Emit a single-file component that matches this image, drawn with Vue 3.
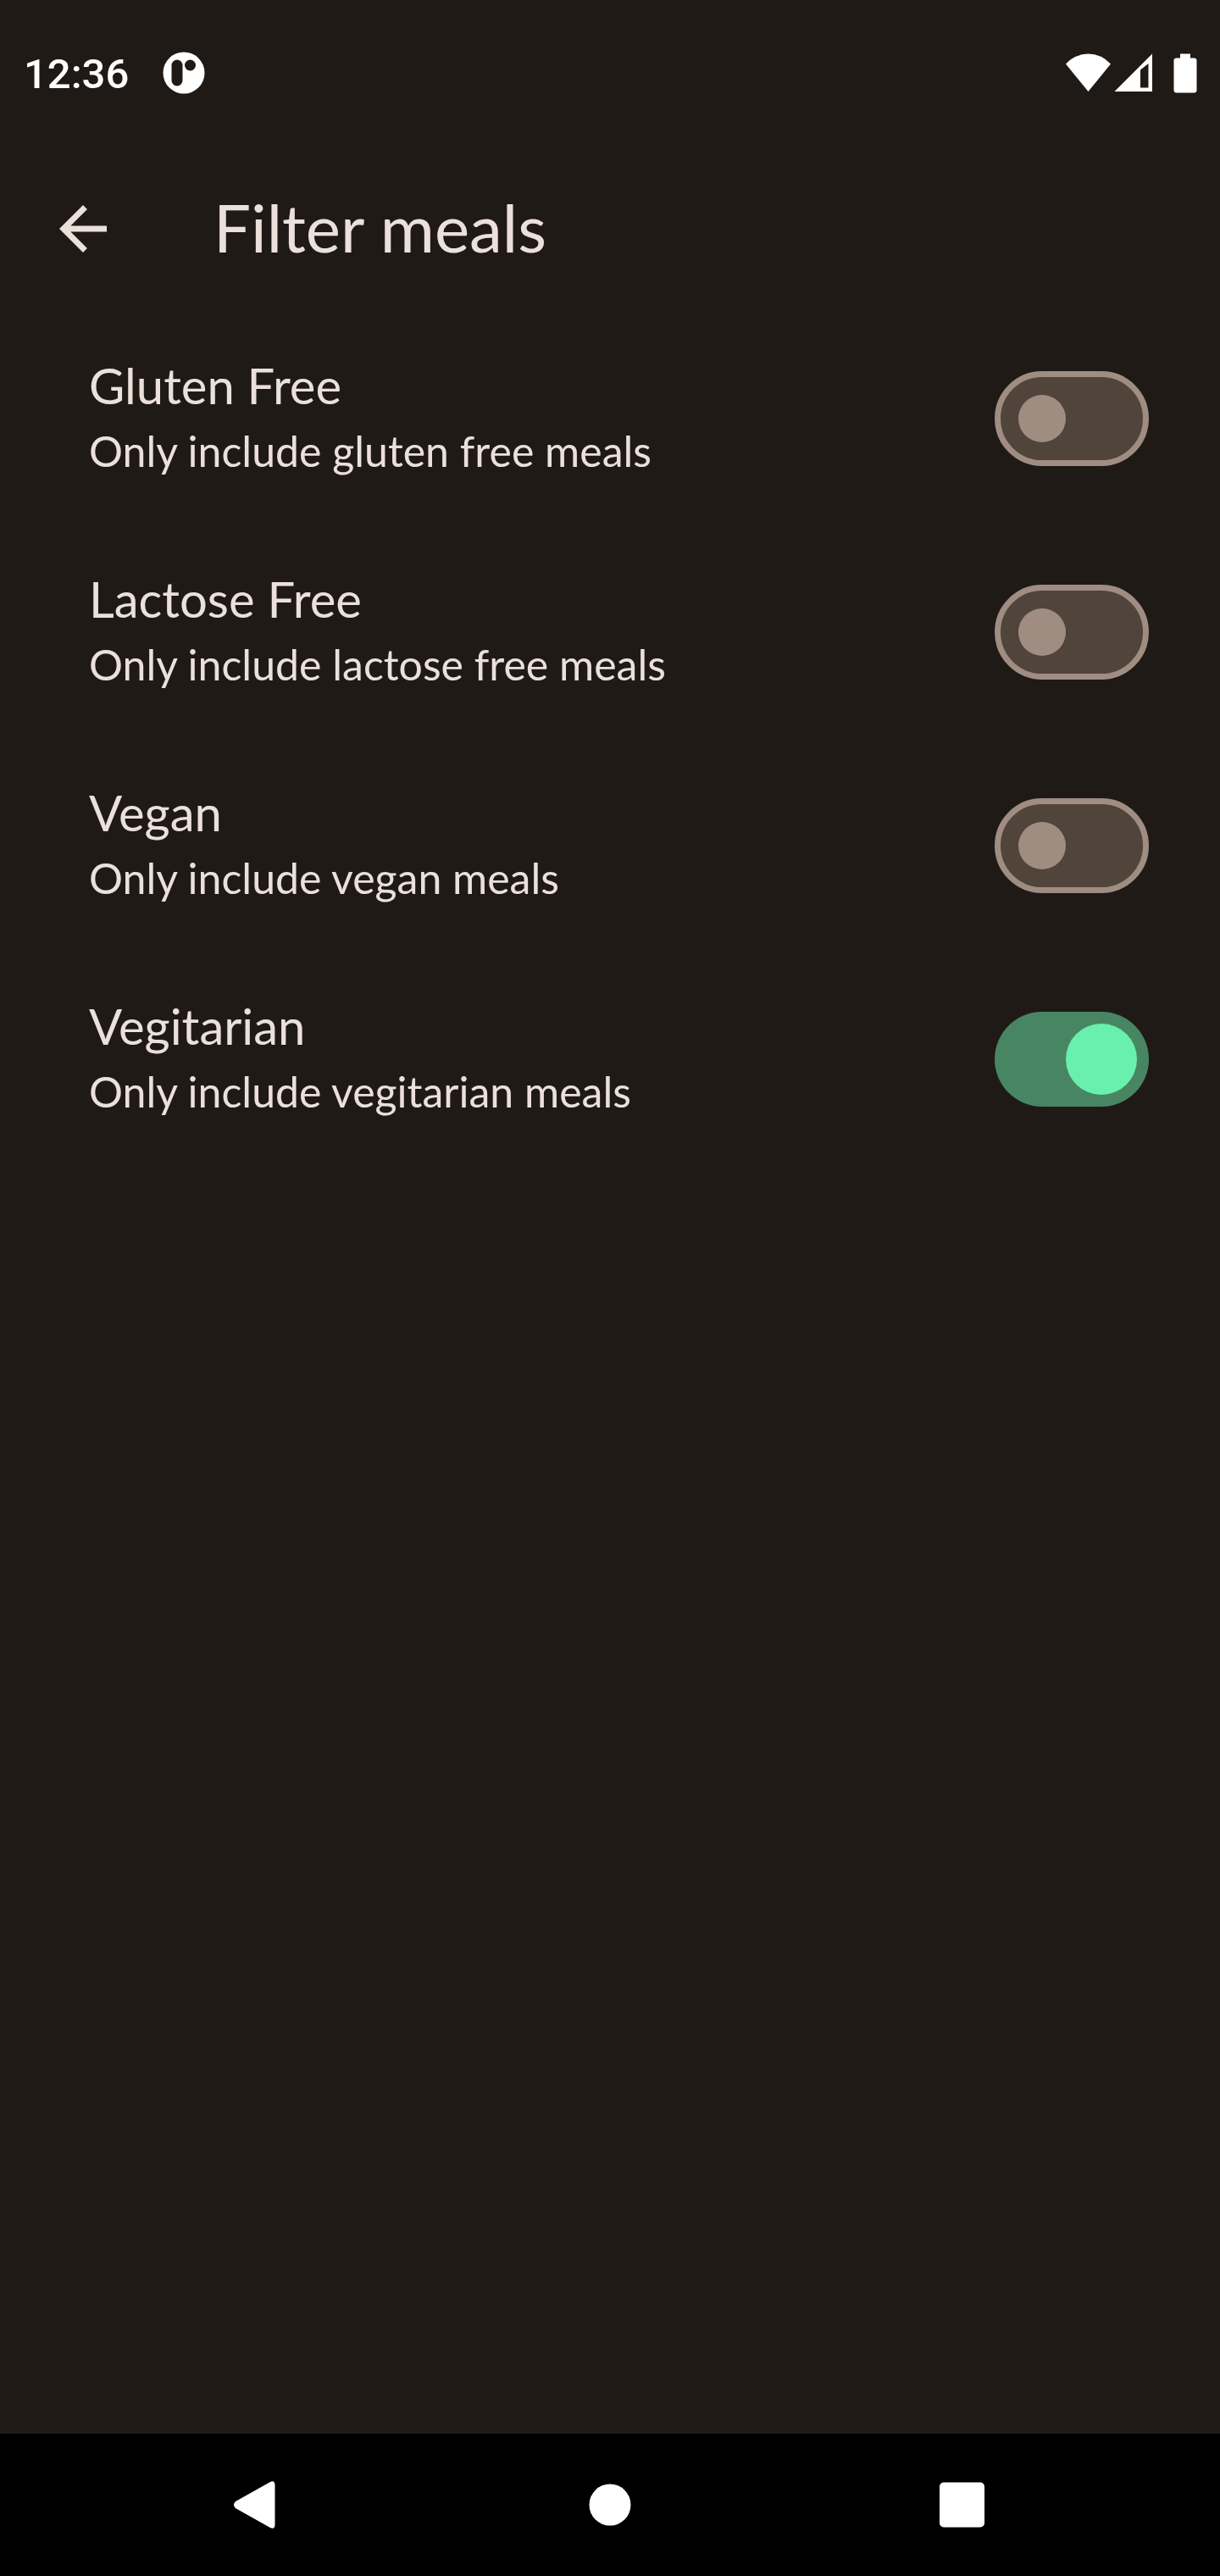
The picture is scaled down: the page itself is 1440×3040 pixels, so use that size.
<script setup>
import { ref } from 'vue'

const filters = ref([
  { id: 'gluten', title: 'Gluten Free', hint: 'Only include gluten free meals', on: false },
  { id: 'lactose', title: 'Lactose Free', hint: 'Only include lactose free meals', on: false },
  { id: 'vegan', title: 'Vegan', hint: 'Only include vegan meals', on: false },
  { id: 'vegitarian', title: 'Vegitarian', hint: 'Only include vegitarian meals', on: true },
])
</script>

<template>
  <div class="screen">
    <div class="status">
      <time class="clock">12:36</time>
      <svg class="notice" viewBox="0 0 50 50" aria-hidden="true">
        <circle cx="25" cy="25" r="24.5" fill="#fff" />
        <rect x="10.5" y="9.5" width="13" height="31" rx="6.5" />
        <circle cx="32.5" cy="16" r="6.5" />
      </svg>
      <svg class="signals" viewBox="0 0 156 48" aria-hidden="true">
        <path d="M0 13.500Q11.500 1.500 26.500 1.500T53 13.500L26.500 46Z" />
        <path fill-rule="evenodd" d="M57.500 46L102 1.500V46ZM88 20.500V41.500H97.500V13Z" />
        <path d="M135 1.500h12v5h4.500q3 0 3 3v35q0 3-3 3h-21q-3 0-3-3v-35q0-3 3-3h4.500z" />
      </svg>
    </div>

    <header class="bar">
      <button class="back" type="button" aria-label="Back">
        <svg viewBox="0 0 24 24" aria-hidden="true">
          <path d="M20 11H7.830l5.590-5.590L12 4l-8 8 8 8 1.410-1.410L7.830 13H20v-2z" />
        </svg>
      </button>
      <h1>Filter meals</h1>
    </header>

    <main>
      <div v-for="f in filters" :key="f.id" class="tile">
        <label class="text" :for="f.id">
          <span class="title">{{ f.title }}</span>
          <span class="hint">{{ f.hint }}</span>
        </label>
        <input :id="f.id" v-model="f.on" class="switch" type="checkbox" role="switch" />
      </div>
    </main>

    <nav class="keys">
      <button type="button" aria-label="Back">
        <svg viewBox="0 0 84 84" aria-hidden="true">
          <path d="M16 38L57 15Q62 12.500 62.500 18V66Q62 71.500 57 69L16 46Q12 42 16 38Z" />
        </svg>
      </button>
      <button type="button" aria-label="Home">
        <svg viewBox="0 0 84 84" aria-hidden="true"><circle cx="42" cy="42" r="24.500" /></svg>
      </button>
      <button type="button" aria-label="Recent apps">
        <svg viewBox="0 0 84 84" aria-hidden="true"><rect x="15" y="15.500" width="53" height="53" rx="5" /></svg>
      </button>
    </nav>
  </div>
</template>

<style>
body {
  margin: 0;
  background: #1f1b16;
}
</style>

<style scoped>
.screen {
  display: flex;
  flex-direction: column;
  min-height: 100vh;
  background: #201a17;
  color: #ebe0da;
  font-family: Lato, sans-serif;
}

.status {
  display: flex;
  align-items: center;
  box-sizing: border-box;
  height: 172px;
  padding: 0 26px 0 28px;
}

.clock {
  padding-top: 4px;
  color: #fff;
  font: 500 49px/56px Roboto, sans-serif;
}

.notice {
  width: 50px;
  height: 50px;
  margin-left: 40px;
  fill: #201a17;
}

.signals {
  width: 156px;
  height: 48px;
  margin-left: auto;
  fill: #fff;
}

.bar {
  display: flex;
  align-items: center;
  gap: 112px;
  height: 196px;
  padding: 0 56px;
}

button {
  padding: 0;
  border: 0;
  background: none;
}

.back,
.back svg {
  display: block;
  width: 84px;
  height: 84px;
  fill: #ebe0da;
}

h1 {
  margin: 0;
  padding-bottom: 4px;
  font-size: 78px;
  font-weight: 400;
  line-height: 98px;
}

main {
  flex: 1;
}

.tile {
  display: flex;
  align-items: center;
  justify-content: space-between;
  height: 252px;
  padding: 0 84px 0 105px;
}

.text {
  display: flex;
  flex-direction: column;
  padding-bottom: 8px;
}

.title {
  font-size: 58px;
  line-height: 84px;
}

.hint {
  font-size: 50px;
  line-height: 70px;
}

.switch {
  display: flex;
  align-items: center;
  flex: none;
  box-sizing: border-box;
  width: 182px;
  height: 112px;
  margin: 0;
  padding: 0 21px;
  appearance: none;
  border: 7px solid #a08d82;
  border-radius: 56px;
  background: #51443a;
}

.switch::before {
  content: '';
  width: 56px;
  height: 56px;
  border-radius: 50%;
  background: #a08d82;
}

.switch:checked {
  justify-content: flex-end;
  padding: 0 14px;
  border: 0;
  background: #488663;
}

.switch:checked::before {
  width: 84px;
  height: 84px;
  background: #69f0ae;
}

.keys {
  display: grid;
  grid-template-columns: repeat(3, 1fr);
  align-items: center;
  height: 168px;
  padding: 0 96px;
  background: #000;
}

.keys svg {
  display: block;
  width: 84px;
  height: 84px;
  margin: 0 auto;
  fill: #fff;
}
</style>
